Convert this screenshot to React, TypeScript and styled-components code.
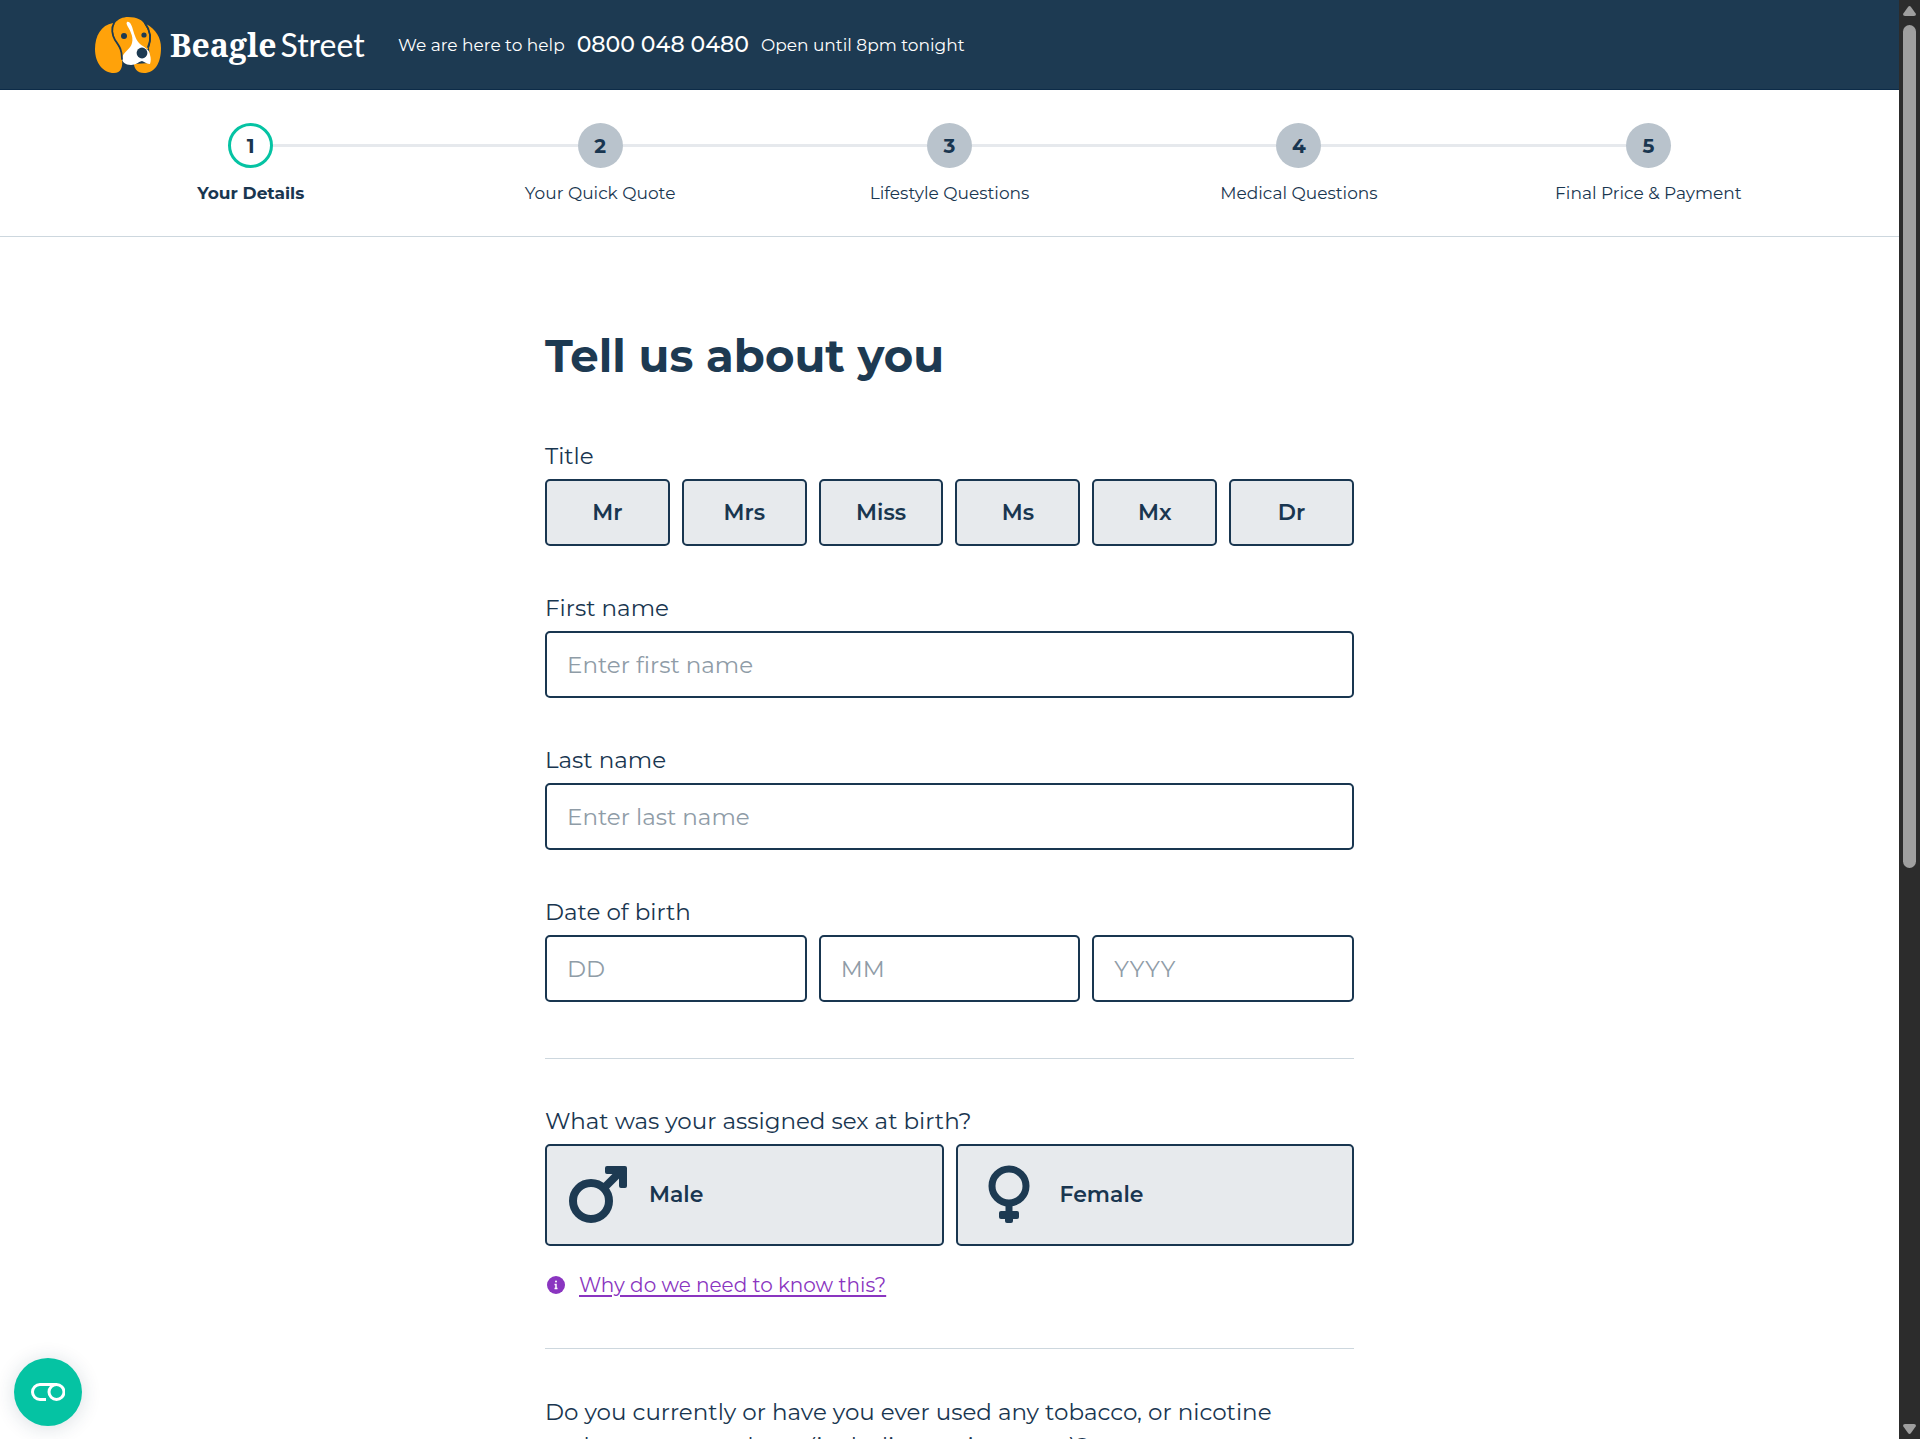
import React from "react";
import styled, { createGlobalStyle, css } from "styled-components";

const navy = "#1d3a52";
const ink = "#193650";
const teal = "#05c3a3";
const rule = "#cdd7de";
const purple = "#8a35c0";

const GlobalStyle = createGlobalStyle`
  *, *::before, *::after { box-sizing: border-box; }
  body {
    margin: 0;
    background: #fff;
    color: ${ink};
    font-family: Montserrat, Inter, "Open Sans", sans-serif;
    font-size: 23px;
    font-weight: 400;
    line-height: 32px;
  }
  button, input { font: inherit; color: inherit; }
`;

const Shell = styled.div`
  display: flex;
  height: 100vh;
  overflow: hidden;
`;

const Page = styled.div`
  flex: 1;
  min-width: 0;
  overflow: hidden;
`;

const Header = styled.header`
  display: flex;
  align-items: center;
  height: 90px;
  padding: 0 94px;
  background: ${navy};
  border-bottom: 1px solid #0c2b48;
  color: #fff;
`;

const Logo = styled.a`
  display: flex;
  align-items: center;
  width: 304px;
  color: inherit;
  text-decoration: none;
`;

const Wordmark = styled.span`
  display: flex;
  gap: 4px;
  margin-left: 8px;
  font-size: 32px;
  line-height: 40px;
`;

const Beagle = styled.span`
  font-family: "Noto Serif", "DejaVu Serif", serif;
  font-weight: 700;
`;

const Street = styled.span`
  font-family: Lato, "Open Sans", sans-serif;
  font-weight: 400;
`;

const Help = styled.p`
  display: flex;
  align-items: center;
  gap: 12px;
  margin: 0;
  font-size: 17px;
  line-height: 24px;
`;

const Phone = styled.a`
  color: inherit;
  font-size: 22px;
  font-weight: 500;
  text-decoration: none;
`;

const Stepper = styled.nav`
  padding: 33px 76px 27px;
  border-bottom: 1px solid ${rule};
`;

const StepList = styled.ol`
  display: flex;
  margin: 0;
  padding: 0;
  list-style: none;
`;

const Badge = styled.span<{ $current?: boolean }>`
  display: grid;
  place-items: center;
  width: 45px;
  height: 45px;
  border-radius: 50%;
  background: #b9c3cc;
  font-size: 20px;
  font-weight: 700;
  ${(p) => p.$current && css`
    background: #fff;
    border: 3px solid ${teal};
  `}
`;

const StepTrack = styled.span`
  display: flex;
  align-items: center;
  align-self: stretch;
`;

const Line = styled.span<{ $hidden?: boolean }>`
  flex: 1;
  height: 3px;
  background: ${(p) => (p.$hidden ? "transparent" : "#e6e9ed")};
`;

const Step = styled.li<{ $current?: boolean }>`
  display: flex;
  flex: 1;
  flex-direction: column;
  align-items: center;
  gap: 9px;
  font-size: 17px;
  font-weight: ${(p) => (p.$current ? 700 : 400)};
`;

const Form = styled.form`
  display: flex;
  flex-direction: column;
  width: 100%;
  max-width: 809px;
  margin: 0 auto;
  padding-top: 87px;
`;

const Heading = styled.h1`
  margin: 0 0 52px;
  color: ${navy};
  font-size: 45px;
  font-weight: 700;
  line-height: 64px;
`;

const Field = styled.div`
  display: flex;
  flex-direction: column;
  gap: 7px;
  margin: 0 0 46px;
`;

const Row = styled.div`
  display: flex;
  gap: 12px;
`;

const Choice = styled.button`
  flex: 1;
  height: 67px;
  padding: 0;
  border: 2px solid ${ink};
  border-radius: 5px;
  background: #e7eaed;
  font-size: 22px;
  font-weight: 600;
  cursor: pointer;
`;

const SexChoice = styled(Choice)`
  display: flex;
  align-items: center;
  gap: 20px;
  height: 102px;
  padding: 0 20px;
`;

const TextInput = styled.input`
  flex: 1 1 0;
  width: 100%;
  min-width: 0;
  min-height: 67px;
  padding: 0 20px;
  border: 2px solid ${ink};
  border-radius: 5px;
  background: #fff;
  &::placeholder { color: #8f9ca7; opacity: 1; }
`;

const Divider = styled.hr`
  width: 100%;
  margin: 10px 0 46px;
  border: 0;
  border-top: 1px solid ${rule};
`;

const HelpLink = styled.a`
  display: flex;
  align-items: center;
  gap: 14px;
  margin: -23px 0 37px 2px;
  color: ${purple};
  font-size: 20px;
  text-decoration: none;
  span { text-decoration: underline; text-underline-offset: 3px; }
`;

const Question = styled.p`
  margin: 0;
  line-height: 34px;
`;

const Scrollbar = styled.div`
  display: flex;
  flex-direction: column;
  align-items: center;
  flex: 0 0 21px;
  padding: 6px 0 5px;
  background: #2c2c2c;
`;

const Thumb = styled.div`
  width: 13px;
  height: 59%;
  margin: 9px 0 auto;
  border-radius: 7px;
  background: #9f9f9f;
`;

const CookieButton = styled.button`
  position: fixed;
  left: 14px;
  bottom: 13px;
  display: grid;
  place-items: center;
  width: 68px;
  height: 68px;
  padding: 0;
  border: 0;
  border-radius: 50%;
  background: ${teal};
  box-shadow: 0 2px 20px rgba(25, 54, 80, 0.16);
  cursor: pointer;
`;

const Dog = () => (
  <svg width="68" height="58" viewBox="0 0 68 58" aria-hidden="true">
    <path fill="#ffa20a" d="M34 1C43 1 49 4 51 9C57 18 56 25 54 33L28 42C28 32 22 28 20 20C18 14 19 10 21 7C24 3 29 1 34 1Z" />
    <path fill="#ffa20a" d="M19 7C7 9 1 20 1 33C1 47 9 57 20 57C27 57 29 51 28 43C28 33 22 28 20 21C18 15 18 11 21 7Z" />
    <path fill="#ffa20a" d="M52 8C62 13 67 22 67 32C67 47 61 57 50 57C43 57 40 52 40 48L56 47L55 32C58 24 57 15 52 8Z" />
    <path fill="#fff" d="M33 6C36 5 38 10 39 14C41 20 42 24 46 28C50 31 56 34 56 39C57 42 57 45 56 48C53 48 51 46 48 45C44 46 42 49 37 49C31 49 28 46 28 42C29 36 37 33 38 27C40 20 35 13 33 9Q32 7 33 6Z" />
    <path fill="none" stroke={navy} strokeWidth="1.8" strokeLinecap="round" d="M20 7C17 12 18 19 21 24C26 31 28 34 28 43M51 7C57 15 57 24 54 31" />
    <circle cx="30" cy="20" r="3" fill={navy} />
    <circle cx="50" cy="19" r="2.600" fill={navy} />
    <circle cx="48" cy="37" r="5.400" fill={navy} />
  </svg>
);

const MaleIcon = () => (
  <svg width="62" height="62" viewBox="0 0 62 62" aria-hidden="true" fill="none" stroke={navy}>
    <circle cx="24" cy="37" r="18" strokeWidth="8" />
    <path strokeWidth="8" d="M37 24L53 8" />
    <path fill={navy} stroke="none" d="M40 2H58Q60 2 60 4V22Q60 24 58 24H54Q52 24 52 22V10H40Q38 10 38 8V4Q38 2 40 2Z" />
  </svg>
);

const FemaleIcon = () => (
  <svg width="62" height="62" viewBox="0 0 62 62" aria-hidden="true" fill="none" stroke={navy}>
    <circle cx="31" cy="22" r="17" strokeWidth="7" />
    <path strokeWidth="7" d="M31 38V57" />
    <rect x="21" y="47" width="20" height="8" rx="2" fill={navy} stroke="none" />
    <rect x="27" y="50" width="8" height="9" rx="2" fill={navy} stroke="none" />
  </svg>
);

const InfoIcon = () => (
  <svg width="18" height="18" viewBox="0 0 18 18" aria-hidden="true">
    <circle cx="9" cy="9" r="9" fill={purple} />
    <circle cx="9" cy="5.500" r="1" fill="#fff" />
    <path fill="none" stroke="#fff" strokeWidth="1.500" d="M7.500 8.500H9V12.500M7.500 12.500H10.500" />
  </svg>
);

const steps = ["Your Details", "Your Quick Quote", "Lifestyle Questions", "Medical Questions", "Final Price & Payment"];
const titles = ["Mr", "Mrs", "Miss", "Ms", "Mx", "Dr"];

export default function App() {
  return (
    <>
      <GlobalStyle />
      <Shell>
        <Page>
          <Header>
            <Logo href="#" aria-label="Beagle Street">
              <Dog />
              <Wordmark><Beagle>Beagle</Beagle><Street>Street</Street></Wordmark>
            </Logo>
            <Help>
              <span>We are here to help</span>
              <Phone href="tel:08000480480">0800 048 0480</Phone>
              <span>Open until 8pm tonight</span>
            </Help>
          </Header>
          <Stepper aria-label="Progress">
            <StepList>
              {steps.map((label, i) => (
                <Step key={label} $current={i === 0} aria-current={i === 0 ? "step" : undefined}>
                  <StepTrack>
                    <Line $hidden={i === 0} />
                    <Badge $current={i === 0}>{i + 1}</Badge>
                    <Line $hidden={i === steps.length - 1} />
                  </StepTrack>
                  <span>{label}</span>
                </Step>
              ))}
            </StepList>
          </Stepper>
          <Form>
            <Heading>Tell us about you</Heading>
            <Field role="group" aria-labelledby="title-label">
              <span id="title-label">Title</span>
              <Row>{titles.map((t) => <Choice type="button" key={t}>{t}</Choice>)}</Row>
            </Field>
            <Field>
              <label htmlFor="first-name">First name</label>
              <TextInput id="first-name" placeholder="Enter first name" />
            </Field>
            <Field>
              <label htmlFor="last-name">Last name</label>
              <TextInput id="last-name" placeholder="Enter last name" />
            </Field>
            <Field role="group" aria-labelledby="dob-label">
              <span id="dob-label">Date of birth</span>
              <Row>
                <TextInput aria-label="Day" placeholder="DD" />
                <TextInput aria-label="Month" placeholder="MM" />
                <TextInput aria-label="Year" placeholder="YYYY" />
              </Row>
            </Field>
            <Divider />
            <Field role="group" aria-labelledby="sex-label">
              <span id="sex-label">What was your assigned sex at birth?</span>
              <Row>
                <SexChoice type="button"><MaleIcon />Male</SexChoice>
                <SexChoice type="button"><FemaleIcon />Female</SexChoice>
              </Row>
            </Field>
            <HelpLink href="#why"><InfoIcon /><span>Why do we need to know this?</span></HelpLink>
            <Divider />
            <Question>
              Do you currently or have you ever used any tobacco, or nicotine replacement products (including e-cigarettes)?
            </Question>
          </Form>
        </Page>
        <Scrollbar aria-hidden="true">
          <svg width="13" height="10" viewBox="0 0 13 10"><path fill="#9f9f9f" d="M5 1Q6.500-1 8 1L13 8Q13 10 11 10H2Q0 10 0 8Z" /></svg>
          <Thumb />
          <svg width="13" height="10" viewBox="0 0 13 10"><path fill="#9f9f9f" d="M5 9Q6.500 11 8 9L13 2Q13 0 11 0H2Q0 0 0 2Z" /></svg>
        </Scrollbar>
        <CookieButton type="button" aria-label="Cookie preferences">
          <svg width="34" height="18" viewBox="0 0 34 18" fill="none" stroke="#fff" strokeWidth="3">
            <path d="M15 16.500H9A7.500 7.500 0 0 1 9 1.500H26" />
            <circle cx="25.500" cy="9" r="7.500" />
          </svg>
        </CookieButton>
      </Shell>
    </>
  );
}
